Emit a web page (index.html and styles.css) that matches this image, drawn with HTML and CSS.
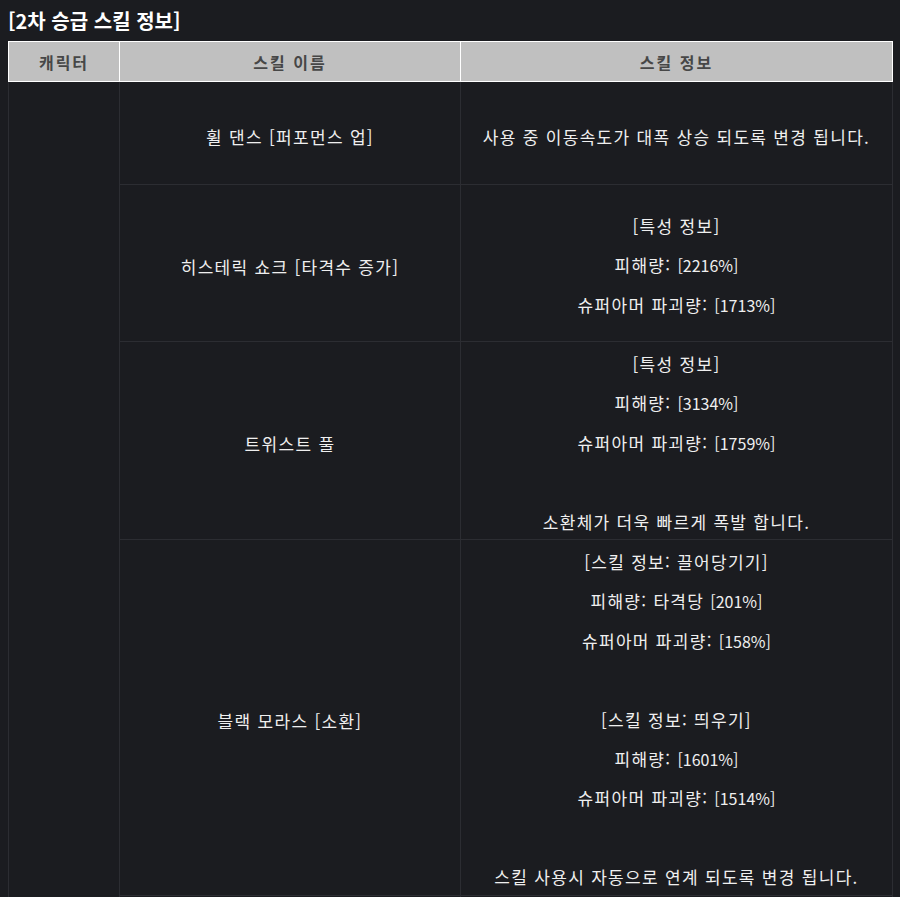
FILE: index.html
```html
<!DOCTYPE html>
<html lang="ko">
<head>
<meta charset="utf-8">
<link rel="stylesheet" href="styles.css">
</head>
<body>
<div class="title">[2차 승급 스킬 정보]</div>
<table class="skills">
  <colgroup>
    <col class="c1"><col class="c2"><col class="c3">
  </colgroup>
  <thead>
    <tr><th>캐릭터</th><th>스킬 이름</th><th>스킬 정보</th></tr>
  </thead>
  <tbody>
    <tr class="r1">
      <td class="char" rowspan="5"></td>
      <td class="name">휠 댄스 [퍼포먼스 업]</td>
      <td class="info"><div class="ln">사용 중 이동속도가 대폭 상승 되도록 변경 됩니다.</div></td>
    </tr>
    <tr class="r2">
      <td class="name">히스테릭 쇼크 [타격수 증가]</td>
      <td class="info">
        <div class="ln">[특성 정보]</div>
        <div class="ln">피해량: <span class="v">[2216%]</span></div>
        <div class="ln">슈퍼아머 파괴량: <span class="v">[1713%]</span></div>
      </td>
    </tr>
    <tr>
      <td class="name">트위스트 풀</td>
      <td class="info">
        <div class="ln">[특성 정보]</div>
        <div class="ln">피해량: <span class="v">[3134%]</span></div>
        <div class="ln">슈퍼아머 파괴량: <span class="v">[1759%]</span></div>
        <div class="ln">&nbsp;</div>
        <div class="ln">소환체가 더욱 빠르게 폭발 합니다.</div>
      </td>
    </tr>
    <tr>
      <td class="name">블랙 모라스 [소환]</td>
      <td class="info">
        <div class="ln">[스킬 정보: 끌어당기기]</div>
        <div class="ln">피해량: 타격당 <span class="v">[201%]</span></div>
        <div class="ln">슈퍼아머 파괴량: <span class="v">[158%]</span></div>
        <div class="ln">&nbsp;</div>
        <div class="ln">[스킬 정보: 띄우기]</div>
        <div class="ln">피해량: <span class="v">[1601%]</span></div>
        <div class="ln">슈퍼아머 파괴량: <span class="v">[1514%]</span></div>
        <div class="ln">&nbsp;</div>
        <div class="ln">스킬 사용시 자동으로 연계 되도록 변경 됩니다.</div>
      </td>
    </tr>
    <tr class="r5">
      <td></td>
      <td></td>
    </tr>
  </tbody>
</table>
</body>
</html>
```

FILE: styles.css
```css
html, body {
  margin: 0;
  padding: 0;
  background: #1b1c20;
}
body {
  padding: 8px;
  font-family: "Noto Sans CJK KR", "Noto Sans", sans-serif;
  color: #efefef;
}
.title {
  font-size: 20px;
  font-weight: bold;
  line-height: 25px;
  color: #ffffff;
  margin-bottom: 8px;
}
.skills {
  width: 884px;
  border-collapse: collapse;
  table-layout: fixed;
  font-size: 17px;
  letter-spacing: 1.3px;
}
.c1 { width: 111px; }
.c2 { width: 341px; }
.c3 { width: 432px; }
.skills th {
  background: #c0c0c0;
  color: #474747;
  font-weight: bold;
  font-size: 16px;
  letter-spacing: 2px;
  height: 38px;
  padding: 1px 0 0;
  border: 1px solid #ffffff;
  text-align: center;
}
.skills td {
  border: 1px solid #2c2d32;
  text-align: center;
  vertical-align: middle;
  padding: 0;
}
.skills td.name {
  padding-top: 6px;
}
.r1 { height: 103px; }
.r1 td.info { padding-top: 3px; }
.r2 { height: 157px; }
.r5 { height: 20px; }
.ln {
  padding-top: 5px;
  line-height: 34.4px;
}
.v {
  font-size: 16px;
  letter-spacing: 0;
  line-height: 1;
}
```
